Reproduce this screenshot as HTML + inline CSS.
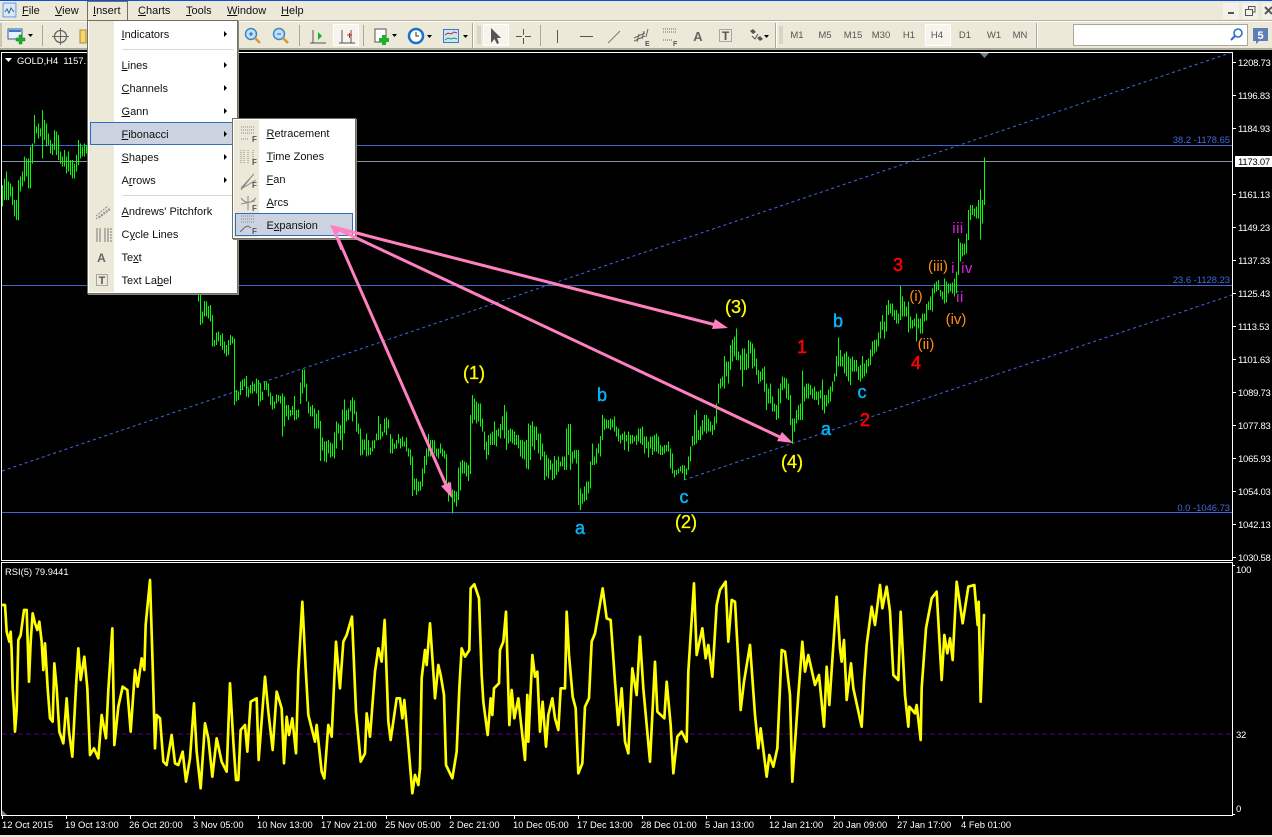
<!DOCTYPE html>
<html lang="en">
<head>
<meta charset="utf-8">
<title>GOLD,H4</title>
<style>
html,body{margin:0;padding:0;width:1272px;height:837px;overflow:hidden;background:#000}
body{position:relative;font-family:"Liberation Sans",sans-serif;font-size:11px;color:#000}
svg{position:absolute;left:0;top:0;display:block}
.a{position:absolute;white-space:nowrap}
.mb{top:5px;height:13px;line-height:13px;font-size:11px;color:#111}
.tf{top:30px;line-height:12px;font-size:9.5px;color:#555;width:26px;text-align:center}
.panel{position:absolute;background:#fff;border:1px solid #716f64;box-sizing:border-box;box-shadow:1px 1px 0 #8a887c}
.strip{position:absolute;background:#ece9d8}
.it{position:absolute;height:14px;line-height:14px;font-size:11px;color:#111;white-space:nowrap}
.hl{position:absolute;background:#cbd3e0;border:1px solid #316ac5;box-sizing:border-box}
.sp{position:absolute;height:1px;background:#dcdacb}
.ar{position:absolute;width:0;height:0;border-left:3px solid #000;border-top:3px solid transparent;border-bottom:3px solid transparent}
</style>
</head>
<body>
<svg width="1272" height="837" viewBox="0 0 1272 837" font-family="Liberation Sans, sans-serif">
<rect width="1272" height="837" fill="#000"/>
<!-- chart frames -->
<g shape-rendering="crispEdges" fill="#fff">
<rect x="1" y="52" width="1232" height="1"/>
<rect x="1" y="52" width="1" height="509"/>
<rect x="1232" y="52" width="1" height="509"/>
<rect x="1" y="560" width="1232" height="1"/>
<rect x="1" y="562" width="1232" height="1"/>
<rect x="1" y="562" width="1" height="254"/>
<rect x="1232" y="562" width="1" height="254"/>
<rect x="1" y="815" width="1232" height="1"/>
<rect x="1233" y="62" width="3" height="1"/><rect x="1233" y="95" width="3" height="1"/><rect x="1233" y="128" width="3" height="1"/><rect x="1233" y="194" width="3" height="1"/><rect x="1233" y="227" width="3" height="1"/><rect x="1233" y="260" width="3" height="1"/><rect x="1233" y="293" width="3" height="1"/><rect x="1233" y="326" width="3" height="1"/><rect x="1233" y="359" width="3" height="1"/><rect x="1233" y="392" width="3" height="1"/><rect x="1233" y="425" width="3" height="1"/><rect x="1233" y="458" width="3" height="1"/><rect x="1233" y="491" width="3" height="1"/><rect x="1233" y="524" width="3" height="1"/><rect x="1233" y="557" width="3" height="1"/>
<rect x="1233" y="565" width="2" height="1"/><rect x="1233" y="814" width="2" height="1"/>
<rect x="2" y="816" width="1" height="3"/><rect x="66" y="816" width="1" height="3"/><rect x="130" y="816" width="1" height="3"/><rect x="194" y="816" width="1" height="3"/><rect x="258" y="816" width="1" height="3"/><rect x="322" y="816" width="1" height="3"/><rect x="386" y="816" width="1" height="3"/><rect x="450" y="816" width="1" height="3"/><rect x="514" y="816" width="1" height="3"/><rect x="578" y="816" width="1" height="3"/><rect x="642" y="816" width="1" height="3"/><rect x="706" y="816" width="1" height="3"/><rect x="770" y="816" width="1" height="3"/><rect x="834" y="816" width="1" height="3"/><rect x="898" y="816" width="1" height="3"/><rect x="962" y="816" width="1" height="3"/>
</g>
<rect x="0" y="835" width="1272" height="2" fill="#ece9d8"/>
<!-- horizontal lines -->
<g shape-rendering="crispEdges">
<rect x="2" y="145" width="1230" height="1" fill="#3f66c8"/>
<rect x="2" y="161" width="1230" height="1" fill="#8590a0"/>
<rect x="2" y="285" width="1230" height="1" fill="#3f66c8"/>
<rect x="2" y="512" width="1230" height="1" fill="#3f66e0"/>
</g>
<!-- channels -->
<g stroke="#4169e1" stroke-width="1" stroke-dasharray="3 3" fill="none">
<path d="M2 471L1230 53"/>
<path d="M684 480L1232 295"/>
</g>
<!-- bars -->
<g stroke="#00ff00" stroke-width="3" fill="none" shape-rendering="crispEdges">
<path transform="scale(.33333)" d="M7 555V620M13 535V600M19 515V600M25 545V600M31 550V590M37 560V615M43 600V650M49 600V660M55 540V662M61 530V575M67 515V560M73 470V545M79 475V530M85 475V565M91 440V565M97 430V490M103 345V430M109 380V400M115 370V415M121 385V410M127 330V475M133 360V420M139 370V440M145 400V435M151 420V460M157 430V465M163 390V450M169 395V465M175 405V480M181 455V490M187 470V500M193 450V500M199 470V520M205 455V515M211 480V525M217 480V535M223 490V535M229 465V515M235 420V495M241 430V475M247 440V470M253 430V470M259 435V460"/>
<path transform="translate(180 280) scale(.33333)" d="M55 40V65M61 45V135M67 95V130M73 63V110M79 65V110M85 78V115M91 75V125M97 105V200M103 180V200M109 157V195M115 155V185M121 165V198M127 160V210M133 185V220M139 195V230M145 180V225M151 165V195M157 170V190M163 175V375M169 330V365M175 335V360M181 305V345M187 298V330M193 295V320M199 288V350M205 325V352M211 315V340M217 305V340M223 310V335M229 295V340M235 300V378M241 310V365M247 335V360M253 305V330M259 305V330M265 310V350M271 338V375M277 348V388M283 365V385M289 343V370M295 345V365M301 348V370M307 340V470M313 350V440M319 375V410M325 375V420M331 390V410M337 378V405M343 348V422M349 390V418M355 388V412M361 308V372M367 268V340M373 268V322M379 310V365M385 365V400M391 380V410M397 375V410M403 385V445M409 400V445M415 390V445M421 423V543M427 472V512M433 485V545M439 483V548M445 480V520M451 488V532M457 490V530M463 457V535M469 425V505M475 430V460M481 435V482M487 388V510M493 358V460M499 390V425M505 385V420M511 362V395M517 352V425M523 362V402M529 395V455M535 430V462M541 445V527M547 478V525M553 478V510M559 460V530M565 480V527M571 502V525M577 482V515M583 480V505M589 460V482M595 408V480M601 432V478M607 455V470M613 415V458M619 412V465M625 418V445M631 462V520M637 475V520M643 490V507M649 480V505M655 462V490M661 475V505M667 470V500M673 485V500M679 472V515M685 505V530M691 508V555M697 530V648M703 595V630M709 595V645M715 605V635M721 605V632M727 565V620M733 528V580M739 505V555M745 462V530M751 480V530M757 480V525M763 482V520M769 505V530M775 505V535M781 490V520M787 505V530M793 512V535M799 522V625M805 605V665M811 607V650M817 628V700M823 632V668M829 635V680M835 562V660M841 545V632M847 540V580M853 545V580M859 548V590M865 555V603M871 405V582M877 345V430M883 355V400M889 365V395M895 370V385"/>
<path transform="translate(480 320) scale(.33333)" d="M-16 250V300M-10 260V310M-4 265V305M2 250V320M8 295V335M14 335V390M20 365V418M26 345V405M32 340V375M38 335V375M44 305V375M50 330V380M56 325V350M62 312V355M68 290V330M74 255V355M80 275V390M86 330V370M92 325V365M98 328V370M104 335V375M110 345V375M116 345V385M122 360V410M128 360V415M134 365V418M140 360V445M146 310V448M152 315V420M158 305V380M164 320V390M170 320V360M176 340V400M182 340V420M188 370V410M194 395V480M200 405V470M206 415V475M212 420V450M218 430V480M224 408V475M230 420V465M236 410V455M242 425V440M248 410V440M254 410V450M260 325V450M266 312V405M272 312V450M278 395V430M284 390V415M290 390V430M296 390V555M302 505V570M308 520V550M314 500V545M320 485V540M326 485V520M332 425V505M338 370V435M344 410V435M350 385V430M356 370V400M362 348V410M368 285V360M374 295V330M380 298V325M386 300V325M392 295V330M398 298V322M404 290V335M410 320V350M416 325V365M422 345V370M428 340V360M434 335V390M440 345V365M446 335V395M452 345V372M458 345V370M464 350V365M470 345V375M476 325V365M482 325V370M488 320V375M494 350V400M500 350V385M506 365V412M512 350V385M518 350V405M524 345V395M530 340V395M536 350V400M542 375V405M548 380V405M554 375V400M560 375V395M566 365V395M572 385V445M578 400V460M584 450V472M590 450V465M596 445V460M602 440V455M608 435V460M614 437V480M620 445V465M626 410V450M632 380V425M638 348V378M644 285V375M650 270V370M656 330V360M662 320V360M668 300V345M674 285V335M680 285V340M686 295V335M692 305V335M698 315V345M704 290V330M710 250V310M716 190V250M722 175V205M728 170V200M734 108V205M740 125V170M746 125V190M752 75V150M758 58V125M764 50V110M770 25V120M776 95V122M782 105V150M788 85V200M794 85V150M800 100V150M806 60V145M812 65V100M818 70V145M824 85V140M830 115V165M836 150V190M842 155V185M848 145V180M854 140V215M860 190V270M866 205V250M872 190V250M878 230V275M884 250V275M890 255V300M896 205V295M902 190V250M908 170V210M914 172V205M920 175V235M926 190V240M932 225V315M938 295V370M944 295V335M950 270V310M956 255V300M962 250V300"/>
<path transform="translate(800 150) scale(.33333)" d="M8 662V810M14 710V755M20 700V745M26 700V745M32 705V735M38 715V745M44 710V750M50 725V750M56 725V765M62 720V745M68 688V780M74 735V790M80 735V770M86 718V760M92 710V755M98 695V725M104 670V695M110 618V680M116 562V650M122 600V650M128 620V650M134 610V670M140 605V680M146 620V695M152 625V705M158 620V665M164 630V665M170 630V665M176 650V690M182 645V695M188 618V685M194 640V680M200 630V670M206 625V650M212 598V645M218 575V620M224 570V610M230 568V605M236 548V590M242 515V565M248 495V540M254 515V565M260 465V545M266 450V495M272 460V490M278 460V500M284 480V510M290 480V520M296 490V520M302 408V510M308 440V500M314 455V500M320 470V500M326 455V548M332 500V535M338 510V535M344 505V530M350 490V575M356 505V535M362 505V550M368 490V550M374 490V515M380 462V512M386 455V480M392 440V480M398 415V485M404 400V430M410 395V425M416 390V420M422 420V440M428 425V448M434 385V460M440 395V458M446 400V430M452 400V425M458 398V430M464 385V440M470 365V430M476 265V375M482 278V335M488 280V320M494 280V315M500 250V310M506 180V270M512 165V210M518 165V195M524 175V200M530 170V205M536 150V205M542 118V268M548 150V220M554 22V165"/>
</g>
<!-- arrows -->
<g stroke="#ff80c0" stroke-width="3" fill="none">
<path d="M333 227L716 325"/>
<path d="M333 227L782 438"/>
<path d="M333 227L446 485"/>
</g>
<g fill="#ff80c0">
<polygon points="728,328 712,329 715,319"/>
<polygon points="793,443 777,441 782,432"/>
<polygon points="452,498 441,486 451,482"/>
</g>
<!-- wave labels -->
<g font-size="18" fill="#ffff00" stroke="#ffff00" stroke-width=".3" text-anchor="middle">
<text x="474" y="379">(1)</text><text x="686" y="528">(2)</text><text x="736" y="313">(3)</text><text x="792" y="468">(4)</text>
</g>
<g font-size="18" fill="#0ab0f5" stroke="#0ab0f5" stroke-width=".5" text-anchor="middle">
<text x="580" y="534">a</text><text x="602" y="401">b</text><text x="684" y="503">c</text><text x="838" y="327">b</text><text x="826" y="435">a</text><text x="862" y="398">c</text>
</g>
<g font-size="18" fill="#ff0000" stroke="#ff0000" stroke-width=".5" text-anchor="middle">
<text x="802" y="353">1</text><text x="865" y="426">2</text><text x="898" y="271">3</text><text x="916" y="369">4</text>
</g>
<g font-size="15" fill="#ff8c1a" text-anchor="middle">
<text x="916" y="301">(i)</text><text x="926" y="349">(ii)</text><text x="938" y="271">(iii)</text><text x="956" y="324">(iv)</text>
</g>
<g font-size="15" fill="#e020e0" text-anchor="middle" letter-spacing=".5">
<text x="958" y="233">iii</text><text x="953" y="273">i</text><text x="967" y="273">iv</text><text x="960" y="302">ii</text>
</g>
<!-- axis labels -->
<g font-size="9.5" fill="#fff" letter-spacing="-.25">
<text x="1238" y="66">1208.73</text><text x="1238" y="99">1196.83</text><text x="1238" y="132">1184.93</text>
<text x="1238" y="198">1161.13</text><text x="1238" y="231">1149.23</text><text x="1238" y="264">1137.33</text><text x="1238" y="297">1125.43</text><text x="1238" y="330">1113.53</text><text x="1238" y="363">1101.63</text><text x="1238" y="396">1089.73</text><text x="1238" y="429">1077.83</text><text x="1238" y="462">1065.93</text><text x="1238" y="495">1054.03</text><text x="1238" y="528">1042.13</text><text x="1238" y="561">1030.58</text>
<text x="1236" y="573">100</text><text x="1236" y="738">32</text><text x="1236" y="812">0</text>
</g>
<g font-size="9.4" fill="#fff">
<text x="2" y="828">12 Oct 2015</text><text x="65" y="828">19 Oct 13:00</text><text x="129" y="828">26 Oct 20:00</text><text x="193" y="828">3 Nov 05:00</text><text x="257" y="828">10 Nov 13:00</text><text x="321" y="828">17 Nov 21:00</text><text x="385" y="828">25 Nov 05:00</text><text x="449" y="828">2 Dec 21:00</text><text x="513" y="828">10 Dec 05:00</text><text x="577" y="828">17 Dec 13:00</text><text x="641" y="828">28 Dec 01:00</text><text x="705" y="828">5 Jan 13:00</text><text x="769" y="828">12 Jan 21:00</text><text x="833" y="828">20 Jan 09:00</text><text x="897" y="828">27 Jan 17:00</text><text x="961" y="828">4 Feb 01:00</text>
<text x="5" y="575">RSI(5) 79.9441</text>
<text x="17" y="64">GOLD,H4&#160; 1157.</text>
</g>
<polygon points="5,58 12,58 8.5,62" fill="#fff"/>
<rect x="1235" y="156" width="37" height="11" fill="#fff"/>
<text x="1238" y="165" font-size="9.5" letter-spacing="-.25" fill="#000">1173.07</text>
<g font-size="9.4" fill="#4169e1" text-anchor="end">
<text x="1230" y="143">38.2 -1178.65</text><text x="1230" y="283">23.6 -1128.23</text><text x="1230" y="511">0.0 -1046.73</text>
</g>
<polygon points="980,53 989,53 984.5,58" fill="#708090"/>
<polygon points="2,810 2,815 7,815" fill="#708090"/>
<!-- RSI -->
<path d="M2 734H1232" stroke="#4b0082" stroke-dasharray="5 3" fill="none" shape-rendering="crispEdges"/>
<g stroke="#ffff00" stroke-width="8" fill="none" stroke-linejoin="round" stroke-linecap="round">
<polyline transform="translate(0 555) scale(.33333)" points="8,150 15,150 20,230 28,260 32,230 35,290 38,400 42,465 45,530 50,465 55,255 62,240 72,165 80,165 87,380 92,260 98,175 105,205 112,225 118,200 125,260 130,345 135,265 143,400 150,490 158,500 163,325 170,400 178,530 190,565 200,430 207,530 217,605 228,395 235,280 242,375 253,305 262,400 270,600 282,580 295,610 305,480 318,550 325,405 337,220 343,570 355,455 368,395 382,405 392,530 405,345 413,395 425,310 433,345 437,210 450,75 458,330 465,580 470,480 480,490 490,620 500,630 515,540 525,625 535,630 548,590 558,680 570,610 582,445 590,590 602,700 615,505 625,550 637,665 650,550 665,620 680,650 690,385 700,560 708,675 715,675 722,525 735,510 742,590 752,440 770,430 776,615 795,365 805,470 818,585 830,410 845,460 852,625 860,485 867,540 877,490 888,595 895,350 907,140 917,340 925,480 945,560 950,510 965,650 973,670 985,510 995,545 1008,260 1020,400 1030,260 1040,240 1056,185 1068,470 1082,620 1095,595 1100,475 1110,545 1125,350 1135,280 1145,320 1154,195 1165,500 1172,555 1190,430 1200,430 1207,490 1213,435 1225,570 1237,715 1245,660 1255,690 1260,640"/>
<polyline transform="translate(420 555) scale(.33333)" points="0,640 5,370 15,285 20,330 30,205 40,350 45,430 55,330 62,360 72,420 78,630 97,670 110,590 118,400 125,280 135,305 148,285 152,100 163,88 177,130 185,360 190,440 203,540 212,430 217,480 222,400 237,385 240,285 250,260 258,170 268,510 275,405 283,490 295,430 315,615 322,420 325,560 337,300 345,365 352,350 360,530 368,440 378,575 385,480 397,430 405,490 415,525 422,400 435,400 440,170 447,300 458,425 467,460 475,655 487,625 495,455 507,430 515,260 525,235 548,100 560,190 572,195 585,380 595,510 605,400 615,560 625,595 637,340 650,420 660,245 670,400 690,620 705,320 712,470 733,490 740,380 752,510 760,655 772,545 785,530 800,560 805,350 822,85 830,300 847,220 857,310 865,270 877,365 890,150 900,105 917,80 925,260 935,135 945,140 955,320 962,465 972,380 990,270 1005,480 1015,580 1022,520 1040,665 1048,600 1060,635 1072,580 1085,285 1095,290 1110,420 1117,680 1135,420 1147,260 1155,350 1165,300 1185,390 1197,360 1212,515 1220,335 1228,450 1237,315 1250,125 1260,280"/>
<polyline transform="translate(840 555) scale(.33333)" points="0,280 5,320 12,255 20,435 33,325 40,400 65,515 72,380 80,270 95,155 105,210 120,90 127,160 140,95 150,170 160,360 175,375 182,170 195,420 205,515 208,455 225,475 230,450 242,555 245,400 258,220 275,130 290,110 305,375 313,240 322,295 330,250 338,315 350,80 368,205 385,95 403,90 413,210 416,140 422,440 432,180"/>
</g>
<!-- top chrome -->
<g shape-rendering="crispEdges">
<rect x="0" y="0" width="1272" height="50" fill="#ece9d8"/>
<rect x="0" y="0" width="1272" height="1" fill="#0a50d8"/>
<rect x="0" y="20" width="1272" height="1" fill="#b5b2a0"/>
<rect x="0" y="21" width="1272" height="1" fill="#fff"/>
<rect x="0" y="48" width="1272" height="2" fill="#aca899"/>
<rect x="0" y="23" width="2" height="24" fill="#c8c5b2"/>
</g>
<!-- app icon -->
<rect x="2" y="2" width="15" height="16" fill="#fff"/>
<rect x="3" y="3" width="13" height="14" fill="#dce8f6" stroke="#5f8fc8"/>
<path d="M5 12l2-3 2 4 2-5 3 4" stroke="#3566a8" fill="none"/>
<!-- left toolbar icons -->
<g>
<rect x="8" y="29" width="14" height="10" fill="#e8f0fa" stroke="#2f5f9e"/>
<rect x="9" y="30" width="12" height="2" fill="#3a7ac8"/>
<path d="M16 38h3v-3h3v3h3v3h-3v3h-3v-3h-3z" fill="#20b030" stroke="#0e7a1a" stroke-width=".5"/>
<polygon points="28,34 33,34 30.5,37" fill="#000"/>
<rect x="42" y="25" width="1" height="21" fill="#aca899"/>
<circle cx="60.5" cy="36.5" r="6" fill="none" stroke="#666" stroke-width="1.3"/>
<path d="M60.5 28v17M52 36.5h17" stroke="#666"/>
<path d="M80 30h6v13h-6z" fill="#f5d76e" stroke="#a88a30"/>
<circle cx="251" cy="34" r="5.5" fill="#bfe0f8" stroke="#3a86c8" stroke-width="1.5"/>
<path d="M249 34h4M251 32v4" stroke="#2060b0"/>
<path d="M255 38l5 5" stroke="#d89a30" stroke-width="2.5"/>
<circle cx="279" cy="34" r="5.5" fill="#bfe0f8" stroke="#3a86c8" stroke-width="1.5"/>
<path d="M277 34h4" stroke="#2060b0"/>
<path d="M283 38l5 5" stroke="#d89a30" stroke-width="2.5"/>
<rect x="299" y="25" width="1" height="21" fill="#aca899"/>
<path d="M313 30v13h12M310 43h16" stroke="#555" fill="none"/>
<polygon points="318,32 322,36 318,40" fill="#18b030"/>
<rect x="333.5" y="24.5" width="25" height="21" fill="#f6f4ec" stroke="#fff"/>
<path d="M342 30v13M351 30v13M339 43h16" stroke="#555" fill="none"/>
<path d="M347 35h5M349.5 33v5" stroke="#c03020"/>
<rect x="363" y="25" width="1" height="21" fill="#aca899"/>
<rect x="375" y="29" width="11" height="13" fill="#fff" stroke="#555"/>
<path d="M379 38h3v-3h4v3h3v4h-3v3h-4v-3h-3z" fill="#20b030"/>
<polygon points="392,34 397,34 394.5,37" fill="#000"/>
<circle cx="416" cy="36" r="7" fill="#fff" stroke="#1c70c8" stroke-width="2.5"/>
<path d="M416 32v4h3" stroke="#333" fill="none"/>
<polygon points="427,35 432,35 429.5,38" fill="#000"/>
<rect x="443.5" y="29.5" width="15" height="13" fill="#cfe4f8" stroke="#3a7ac8"/>
<path d="M445 35l3-2 3 1 3-2 3 1" stroke="#a03020" fill="none"/>
<path d="M445 40l3-2 3 1 3-1 3 1" stroke="#20a030" fill="none"/>
<polygon points="463,35 468,35 465.5,38" fill="#000"/>
</g>
<g shape-rendering="crispEdges">
<rect x="473" y="23" width="1" height="25" fill="#fff"/>
<rect x="472" y="23" width="1" height="25" fill="#aca899"/>
<path d="M477 27h4M477 29h4M477 31h4M477 33h4M477 35h4M477 37h4M477 39h4M477 41h4M477 43h4" stroke="#c4c1ae"/>
<rect x="483.5" y="24.5" width="25" height="21" fill="#f6f4ec" stroke="#fff"/>
</g>
<polygon points="491,28 491,43 494.5,39 497,44 499,43 497,38 501,38" fill="#555"/>
<path d="M523.5 29v15M516 36.5h15" stroke="#555" fill="none" stroke-dasharray="6 3"/>
<rect x="540" y="25" width="1" height="21" fill="#aca899"/>
<path d="M557.5 30v13" stroke="#555"/>
<path d="M580 36.5h13" stroke="#555"/>
<path d="M608 43l12-12" stroke="#777"/>
<path d="M634 38l11-5M634 41l11-5M637 42l2-8M642 39l2-8M646 37l2-8" stroke="#666" fill="none"/>
<text x="645" y="46" font-size="7" font-weight="bold" fill="#555">E</text>
<path d="M663 29h13M663 32h13M663 40h9" stroke="#666" stroke-dasharray="1 1"/>
<text x="673" y="46" font-size="7" font-weight="bold" fill="#555">F</text>
<text x="698" y="41" font-size="13" font-weight="bold" fill="#666" text-anchor="middle">A</text>
<rect x="719.5" y="29.5" width="12" height="12" fill="none" stroke="#666" stroke-dasharray="1 1"/>
<text x="725.5" y="40" font-size="12" font-weight="bold" fill="#555" text-anchor="middle">T</text>
<path d="M750 31l3-2 3 3-3 2zM757 38l3-2 3 3-3 2z" fill="#555"/>
<path d="M752 36l3 3 3-5" stroke="#555" fill="none"/>
<polygon points="764,35 769,35 766.5,38" fill="#000"/>
<g shape-rendering="crispEdges">
<rect x="775" y="23" width="1" height="25" fill="#aca899"/>
<rect x="776" y="23" width="1" height="25" fill="#fff"/>
<path d="M779 27h4M779 29h4M779 31h4M779 33h4M779 35h4M779 37h4M779 39h4M779 41h4M779 43h4" stroke="#c4c1ae"/>
<rect x="925.5" y="24.5" width="25" height="21" fill="#f6f4ec" stroke="#fff"/>
<rect x="1036" y="23" width="1" height="25" fill="#aca899"/>
<rect x="1037" y="23" width="1" height="25" fill="#fff"/>
<rect x="1073.5" y="24.5" width="174" height="21" fill="#fff" stroke="#aca899"/>
</g>
<circle cx="1238" cy="33" r="4" fill="#fff" stroke="#2d6fcf" stroke-width="1.6"/>
<path d="M1235 36l-4 4" stroke="#2d6fcf" stroke-width="2"/>
<path d="M1253 28h15v13h-9l-3 3v-3h-3z" fill="#5d7db5"/>
<text x="1260.5" y="39" font-size="11" font-weight="bold" fill="#fff" text-anchor="middle">5</text>
<!-- window buttons -->
<rect x="1223" y="3" width="16" height="16" fill="#f4f2e8"/>
<rect x="1228" y="12" width="6" height="2" fill="#555"/>
<rect x="1242" y="3" width="16" height="16" fill="#f4f2e8"/>
<rect x="1245.5" y="9.5" width="7" height="6" fill="none" stroke="#555"/>
<path d="M1248.5 9V6.5H1255V12h-2" fill="none" stroke="#555"/>
<rect x="1262" y="3" width="10" height="16" fill="#f4f2e8"/>
<path d="M1265 7l7 7M1272 7l-7 7" stroke="#555" stroke-width="2"/>
</svg>

<div class="a mb" style="left:22px"><u>F</u>ile</div>
<div class="a mb" style="left:55px"><u>V</u>iew</div>
<div class="a" style="left:87px;top:1px;width:41px;height:20px;box-sizing:border-box;border:1px solid #716f64;border-bottom:0;background:#ece9d8"></div>
<div class="a mb" style="left:93px"><u>I</u>nsert</div>
<div class="a mb" style="left:138px"><u>C</u>harts</div>
<div class="a mb" style="left:186px"><u>T</u>ools</div>
<div class="a mb" style="left:227px"><u>W</u>indow</div>
<div class="a mb" style="left:281px"><u>H</u>elp</div>

<div class="a tf" style="left:784px">M1</div>
<div class="a tf" style="left:812px">M5</div>
<div class="a tf" style="left:840px">M15</div>
<div class="a tf" style="left:868px">M30</div>
<div class="a tf" style="left:896px">H1</div>
<div class="a tf" style="left:924px">H4</div>
<div class="a tf" style="left:952px">D1</div>
<div class="a tf" style="left:981px">W1</div>
<div class="a tf" style="left:1007px">MN</div>

<!-- Insert menu -->
<div class="panel" style="left:87px;top:20px;width:151px;height:274px"></div>
<div class="strip" style="left:89px;top:21px;width:25px;height:271px"></div>
<div class="sp" style="left:122px;top:49px;width:112px"></div>
<div class="sp" style="left:122px;top:195px;width:112px"></div>
<div class="hl" style="left:90px;top:122px;width:145px;height:23px"></div>
<div class="it" style="left:121.5px;top:28px"><u>I</u>ndicators</div>
<div class="it" style="left:121.5px;top:59px"><u>L</u>ines</div>
<div class="it" style="left:121.5px;top:82px"><u>C</u>hannels</div>
<div class="it" style="left:121.5px;top:105px"><u>G</u>ann</div>
<div class="it" style="left:121.5px;top:128px"><u>F</u>ibonacci</div>
<div class="it" style="left:121.5px;top:151px"><u>S</u>hapes</div>
<div class="it" style="left:121.5px;top:174px">A<u>r</u>rows</div>
<div class="it" style="left:121.5px;top:205px"><u>A</u>ndrews' Pitchfork</div>
<div class="it" style="left:121.5px;top:228px">C<u>y</u>cle Lines</div>
<div class="it" style="left:121.5px;top:251px">Te<u>x</u>t</div>
<div class="it" style="left:121.5px;top:274px">Text La<u>b</u>el</div>
<div class="ar" style="left:224px;top:31px"></div>
<div class="ar" style="left:224px;top:62px"></div>
<div class="ar" style="left:224px;top:85px"></div>
<div class="ar" style="left:224px;top:108px"></div>
<div class="ar" style="left:224px;top:131px"></div>
<div class="ar" style="left:224px;top:154px"></div>
<div class="ar" style="left:224px;top:177px"></div>
<svg style="left:87px;top:200px" width="30" height="90" viewBox="0 0 30 90" font-family="Liberation Sans, sans-serif">
<path d="M9 16L21 6M9 19L23 8M12 18L24 9" stroke="#888" stroke-dasharray="2 1" fill="none"/>
<path d="M10 28v14M13 28v14M18 28v14M21 28v14" stroke="#777" fill="none"/>
<path d="M24 28v14" stroke="#777" stroke-dasharray="2 1" fill="none"/>
<text x="14.5" y="62" font-size="12" font-weight="bold" fill="#666" text-anchor="middle">A</text>
<rect x="9.5" y="74.5" width="11" height="11" fill="none" stroke="#666" stroke-dasharray="1 1"/>
<text x="15" y="84" font-size="11" font-weight="bold" fill="#555" text-anchor="middle">T</text>
</svg>

<!-- Fibonacci submenu -->
<div class="panel" style="left:232px;top:118px;width:124px;height:121px"></div>
<div class="strip" style="left:234px;top:120px;width:25px;height:117px"></div>
<div class="hl" style="left:235px;top:213px;width:118px;height:23px"></div>
<div class="it" style="left:266.5px;top:127px"><u>R</u>etracement</div>
<div class="it" style="left:266.5px;top:150px"><u>T</u>ime Zones</div>
<div class="it" style="left:266.5px;top:173px"><u>F</u>an</div>
<div class="it" style="left:266.5px;top:196px"><u>A</u>rcs</div>
<div class="it" style="left:266.5px;top:219px">E<u>x</u>pansion</div>
<svg style="left:232px;top:118px" width="124" height="121" viewBox="0 0 124 121" font-family="Liberation Sans, sans-serif">
<g stroke="#888" fill="none" stroke-dasharray="1 1">
<path d="M9 9h13M9 12h13M9 15h13M9 21h8"/>
<path d="M9 32v14M12 32v14M16 32v14M21 32v14"/>
<path d="M9 98h14M9 101h14M9 104h14"/>
</g>
<path d="M9 70L22 56M9 71L24 62M9 72L20 58" stroke="#888" fill="none"/>
<path d="M9 80c5 6 9 6 15 0M16 78v14M9 86l14-3" stroke="#888" fill="none"/>
<path d="M8 114l5-5 3-1 3 2" stroke="#666" fill="none"/>
<g font-size="8" font-weight="bold" fill="#555">
<text x="20" y="24">F</text><text x="20" y="47">F</text><text x="20" y="70">F</text><text x="20" y="93">F</text><text x="20" y="116">F</text>
</g>
</svg>
<!-- arrow overlaps submenu tip -->
<svg style="left:325px;top:220px" width="40" height="30" viewBox="0 0 40 30">
<path d="M8 7L40 15M8 7L40 22M8 7L17 30" stroke="#ff80c0" stroke-width="3" fill="none"/>
<polygon points="5,5 18,8 10,16" fill="#ff80c0"/>
</svg>
</body>
</html>
